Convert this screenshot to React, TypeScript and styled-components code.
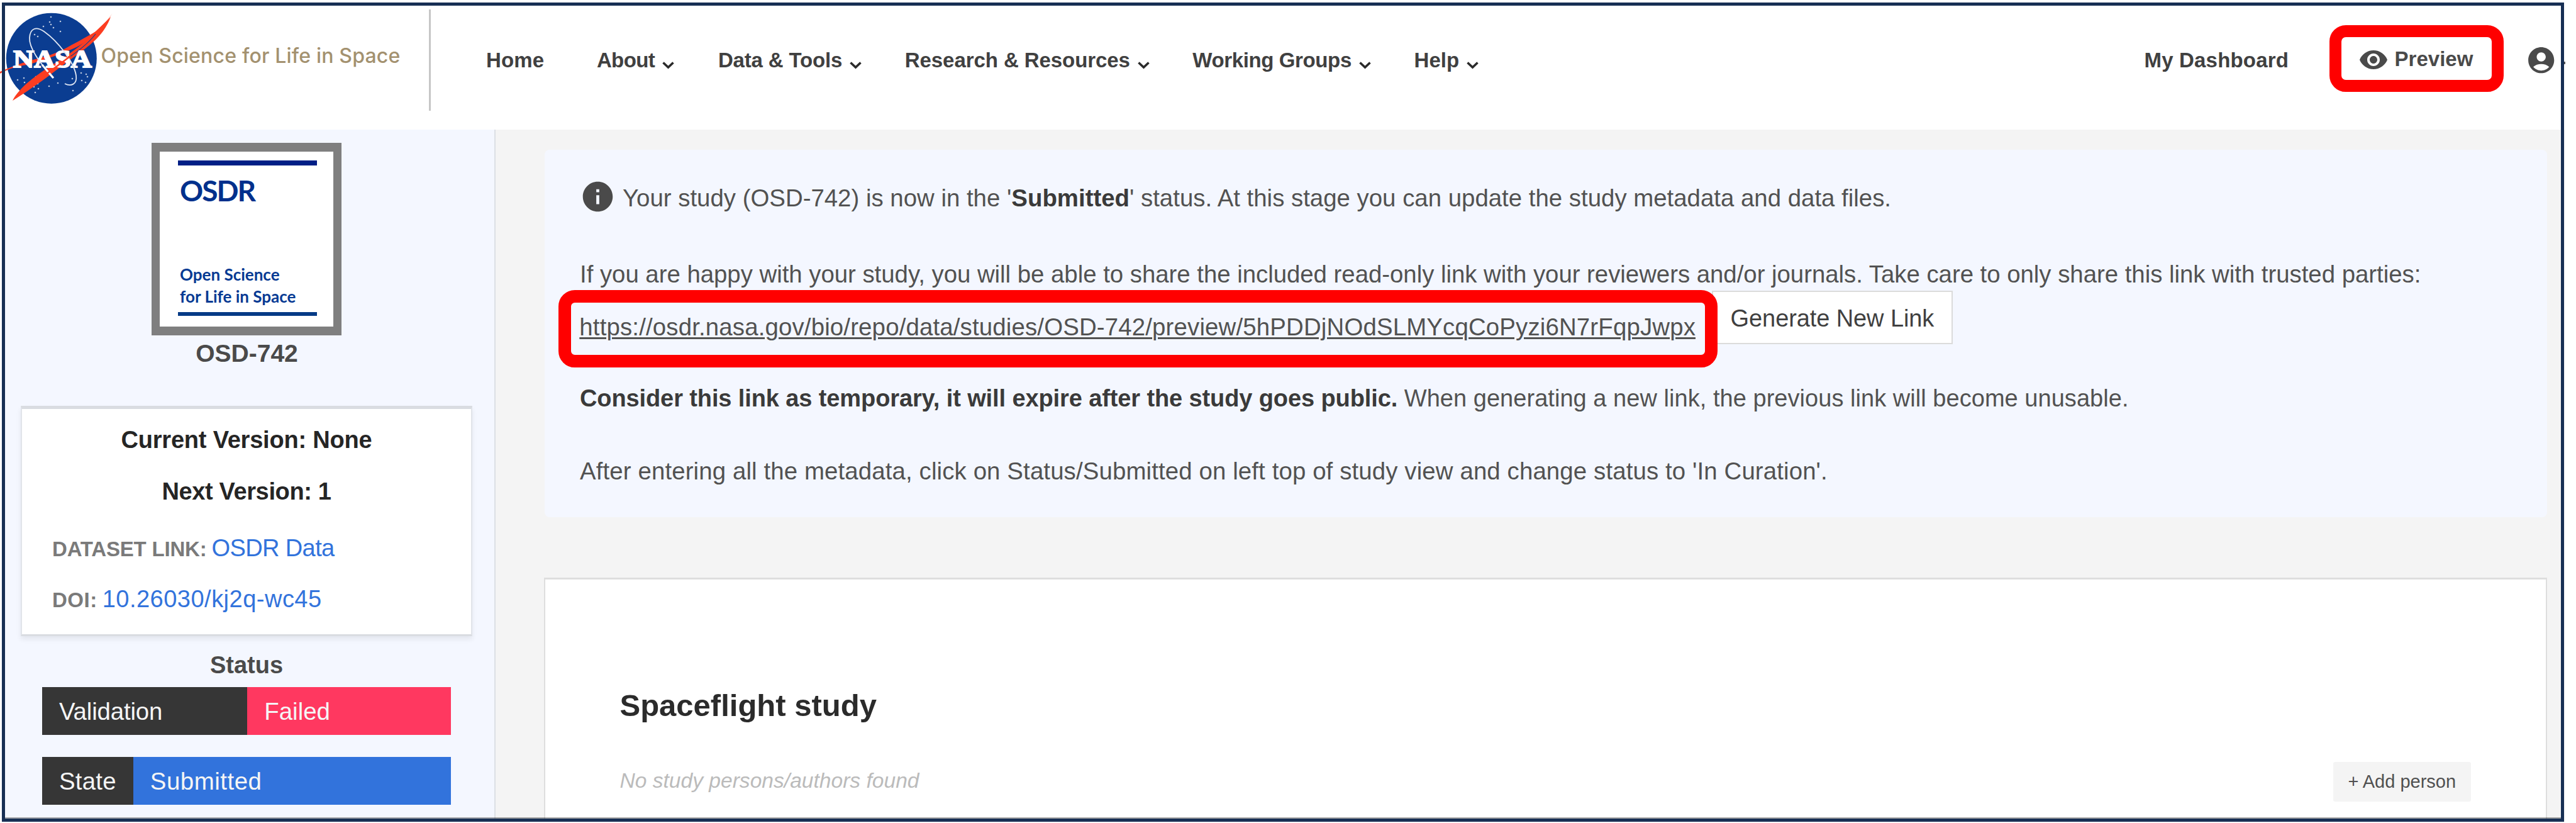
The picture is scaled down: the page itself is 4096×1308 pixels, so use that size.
import React from "react";
import styled, { createGlobalStyle } from "styled-components";
import { MdAccountCircle, MdInfo, MdVisibility } from "react-icons/md";

const GlobalStyle = createGlobalStyle`
  * { box-sizing: border-box; }
  body {
    margin: 0;
    background: #fff;
    font-family: "Liberation Sans", Arial, Helvetica, sans-serif;
    color: #4a4a4a;
  }
`;

const Page = styled.div`
  position: relative;
  width: 4096px;
  height: 1308px;
  overflow: hidden;
  background: #fff;
`;

const Frame = styled.div`
  position: absolute;
  z-index: 5;
  left: 3px;
  top: 4px;
  width: 4074px;
  height: 1302px;
  border: 5px solid #172f54;
  box-shadow: inset 0 -2px 0 rgba(0, 0, 0, 0.35);
  pointer-events: none;
`;

const Header = styled.header`
  display: flex;
  align-items: center;
  height: 206px;
  padding: 1px 31px 16px 0;
  white-space: nowrap;
`;

const Logo = styled.svg`
  flex: none;
  width: 184px;
  height: 160px;
  margin: 0 -23.5px 3px 0;
`;

const Brand = styled.div`
  width: 521.5px;
  margin-bottom: 14px;
  font: 500 32px/40px Inter, sans-serif;
  letter-spacing: 0.19px;
  color: #a3916f;
`;

const Divider = styled.div`
  width: 3px;
  height: 161px;
  margin-right: 88px;
  background: #c6c6c6;
`;

const Nav = styled.nav`
  display: flex;
`;

const NavItem = styled.a<{ $width: number; $spacing?: number }>`
  display: flex;
  align-items: center;
  gap: 12px;
  width: ${(p) => p.$width}px;
  font-size: 33px;
  font-weight: bold;
  line-height: 40px;
  letter-spacing: ${(p) => p.$spacing ?? 0}px;
  color: #404040;
`;

const Chevron = styled.svg`
  width: 19px;
  height: 12px;
  margin-top: 17px;
`;

const UserNav = styled.div`
  display: flex;
  align-items: center;
  margin-left: auto;
`;

const PreviewLink = styled.a`
  display: flex;
  align-items: center;
  gap: 9.5px;
  width: 277px;
  height: 106px;
  margin: 0 34.5px 5px 0;
  padding-left: 27px;
  padding-top: 1px;
  border: 19.5px solid #f00;
  border-radius: 26px;
  font-size: 33px;
  font-weight: bold;
  line-height: 40px;
  color: #4a4a4a;
  svg { margin-top: 2px; }
`;

const OverflowDot = styled.span`
  position: absolute;
  left: 4077px;
  top: 98px;
  width: 2px;
  height: 4px;
  background: #555;
`;

const Body = styled.div`
  display: flex;
  width: 4078px;
  height: 1100px;
  padding-left: 2px;
`;

const Sidebar = styled.aside`
  flex: none;
  display: flex;
  flex-direction: column;
  align-items: center;
  width: 786px;
  padding: 21px 4px 0 0;
  background: #f4f7ff;
  border-right: 2px solid #dcdfe5;
  > * { flex-shrink: 0; }
`;

const Thumbnail = styled.div`
  display: flex;
  flex-direction: column;
  width: 302px;
  height: 306px;
  padding: 14px 25px 0 29px;
  border: solid #7f7f7f;
  border-width: 14px 13px;
  background: #fff;
  font-family: Lato, sans-serif;
  font-weight: bold;
  color: #063a93;
`;

const Rule = styled.div<{ $h: number; $color: string }>`
  flex: none;
  height: ${(p) => p.$h}px;
  background: ${(p) => p.$color};
  width: 221px;
`;

const ThumbTitle = styled.div`
  margin: 16.5px 0 93.5px 3px;
  font-size: 46px;
  line-height: 46px;
  letter-spacing: -2px;
  color: #00308c;
`;

const ThumbText = styled.div`
  margin: 0 0 7px 3px;
  font-size: 26px;
  line-height: 35px;
  white-space: nowrap;
`;

const StudyId = styled.div`
  margin: 7px 0 61px 1px;
  font-size: 39px;
  font-weight: bold;
  line-height: 44px;
`;

const VersionCard = styled.section`
  display: flex;
  flex-direction: column;
  width: 718px;
  height: 366px;
  padding: 27px 48px 0;
  background: #fff;
  border: 2px solid #e1e4ea;
  border-top: 5px solid #d9dce1;
  border-bottom: 3px solid #d9dce1;
  box-shadow: 0 5px 8px rgba(10, 10, 10, 0.07);
`;

const Version = styled.div<{ $gap: number; $spacing: number }>`
  margin-bottom: ${(p) => p.$gap}px;
  font-size: 38px;
  font-weight: bold;
  line-height: 44px;
  letter-spacing: ${(p) => p.$spacing}px;
  text-align: center;
  color: #252525;
`;

const Meta = styled.div`
  display: flex;
  align-items: baseline;
  gap: 8px;
  margin-bottom: 35px;
  line-height: 44px;
`;

const MetaLabel = styled.span<{ $spacing: number }>`
  font-size: 33px;
  font-weight: bold;
  letter-spacing: ${(p) => p.$spacing}px;
  color: #7a7a7a;
`;

const MetaLink = styled.a<{ $spacing: number }>`
  font-size: 38px;
  letter-spacing: ${(p) => p.$spacing}px;
  color: #3273dc;
`;

const StatusTitle = styled.h3`
  margin: 24px 0 12.5px;
  font-size: 38px;
  line-height: 44px;
  color: #4a4a4a;
`;

const StatusRow = styled.div`
  display: flex;
  width: 650px;
  height: 76.5px;
  margin-bottom: 34.5px;
`;

const StatusCell = styled.div<{ $bg: string; $width?: number; $spacing?: number }>`
  display: flex;
  align-items: center;
  flex: ${(p) => (p.$width ? `0 0 ${p.$width}px` : "1")};
  padding: 3px 0 0 27px;
  background: ${(p) => p.$bg};
  font-size: 38.4px;
  letter-spacing: ${(p) => p.$spacing ?? 0}px;
  color: #f5f5f5;
`;

const Main = styled.main`
  display: flex;
  flex-direction: column;
  flex: 1;
  padding: 32px 28px 0 78px;
  background: #f4f4f4;
`;

const Notice = styled.section`
  flex: none;
  height: 584px;
  margin-bottom: 96px;
  padding: 53px 0 0 56px;
  background: #f4f7ff;
  border-radius: 8px;
  white-space: nowrap;
`;

const Line = styled.div<{ $gap: number; $spacing?: number; $size?: number }>`
  display: flex;
  align-items: center;
  height: 48px;
  margin-bottom: ${(p) => p.$gap}px;
  font-size: ${(p) => p.$size ?? 38.4}px;
  line-height: 48px;
  letter-spacing: ${(p) => p.$spacing ?? 0}px;
  white-space: pre;
  color: #525252;
  svg {
    flex: none;
    margin: 0 11px 5px 0;
    color: #4a4a4a;
  }
`;

const Strong = styled.strong<{ $spacing?: number }>`
  letter-spacing: ${(p) => p.$spacing ?? 0}px;
  color: #3a3a3a;
`;

const LinkRow = styled.div`
  display: flex;
  align-items: flex-start;
  height: 123px;
  margin: 1.5px 0 24.5px -33.7px;
`;

const ShareBox = styled.div`
  position: relative;
  z-index: 1;
  width: 1842.6px;
  height: 123px;
  padding: 15px 0 0 13px;
  border: 20.5px solid #f00;
  border-radius: 26px;
`;

const ShareLink = styled.a`
  font-size: 38.4px;
  line-height: 48px;
  letter-spacing: 0.155px;
  text-decoration: underline;
  text-decoration-thickness: 3px;
  text-underline-offset: 3px;
  color: #525252;
`;

const GenerateButton = styled.button`
  width: 383px;
  height: 85px;
  margin: 1px 0 0 -9px;
  padding: 4px 0 0;
  border: 2.5px solid #dbdbdb;
  background: #fff;
  font: 38px "Liberation Sans", sans-serif;
  letter-spacing: -0.1px;
  color: #404040;
`;

const StudyCard = styled.section`
  flex: 1;
  margin-left: -1px;
  padding: 170px 119px 0 118.5px;
  border: 2px solid #dedede;
  border-top-width: 3px;
  background: #fff;
`;

const StudyTitle = styled.h2`
  margin: 0 0 59.5px;
  font-size: 49px;
  line-height: 60px;
  color: #2b2b2b;
`;

const People = styled.div`
  display: flex;
  align-items: center;
  justify-content: space-between;
`;

const EmptyText = styled.em`
  margin-bottom: 3px;
  font-size: 33.6px;
  color: #bbb;
`;

const AddButton = styled.button`
  width: 219.5px;
  height: 63px;
  padding: 0;
  border: 0;
  border-radius: 3px;
  background: #f4f4f4;
  font: 29px "Liberation Sans", sans-serif;
  color: #505050;
`;

const stars = [
  [81, 27], [79, 35], [96, 34], [85, 44], [69, 42], [96, 50], [55, 55], [60, 58], [81, 39],
  [28, 127], [38, 124], [39, 131], [60, 133], [54, 138], [61, 141], [56, 147], [57, 122],
  [78, 137], [92, 132], [116, 144], [129, 116], [137, 118], [139, 122], [130, 128], [136, 131], [115, 125],
];

const NasaLogo = () => (
  <Logo viewBox="0 14 184 160">
    <circle cx="81.8" cy="92.7" r="72" fill="#0b3d91" />
    <g fill="#fff" opacity="0.7">
      {stars.map(([x, y]) => (
        <circle key={`${x}-${y}`} cx={x} cy={y} r="1.3" />
      ))}
    </g>
    <path
      d="M178.8 21 C170 36 156 49 142 56 C130 63 118 69 104 77 C84 88 62 92 42 98 C26 103 12 109 0 114 L0 117 C14 109 28 105 44 103 C66 97 90 88 110 80 C126 74 142 64 154 50 C164 39 174 29 178.8 21 Z"
      fill="#fc3d21"
    />
    <path
      d="M176 27 C166 53 150 66 132 80 C112 95 92 109 73 124 C52 139 36 150 20 160 C23 153 32 142 42 133 C64 114 92 98 112 84 C132 70 146 57 154 48 Z"
      fill="#fc3d21"
    />
    <path d="M152 54 C139 71 120 84 106 94" fill="none" stroke="#0b3d91" strokeWidth="1.2" />
    <text
      x="21"
      y="106.5"
      fill="#fff"
      stroke="#fff"
      strokeWidth="2"
      fontFamily="Liberation Serif, serif"
      fontWeight="bold"
      fontSize="40"
      textLength="125"
      lengthAdjust="spacingAndGlyphs"
    >
      NASA
    </text>
    <path
      d="M84 124 C62 98 46 76 47 60 C48 44 58 42 70 50 C94 67 118 100 121 120 C123 134 113 138 103 133"
      fill="none"
      stroke="#dfe6f3"
      strokeWidth="1.8"
    />
    <path d="M67 103 L85 124" stroke="#fff" strokeWidth="3" />
    <path d="M112 89 C98 100 84 110 69 121" fill="none" stroke="#fc3d21" strokeWidth="2.5" />
  </Logo>
);

const navItems = [
  { label: "Home", width: 175.9, spacing: 0.1 },
  { label: "About", width: 193, spacing: -0.6, menu: true },
  { label: "Data & Tools", width: 296.9, spacing: -0.17, menu: true },
  { label: "Research & Resources", width: 457.5, spacing: -0.07, menu: true },
  { label: "Working Groups", width: 352.3, spacing: -0.38, menu: true },
  { label: "Help", width: 110, spacing: 0, menu: true },
];

export default function App() {
  return (
    <Page>
      <GlobalStyle />
      <Header>
        <NasaLogo />
        <Brand>Open Science for Life in Space</Brand>
        <Divider />
        <Nav>
          {navItems.map((item) => (
            <NavItem key={item.label} $width={item.width} $spacing={item.spacing}>
              {item.label}
              {item.menu && (
                <Chevron viewBox="0 0 19 12">
                  <path d="M1.5 1.5 L9.5 9 L17.5 1.5" fill="none" stroke="#2a2a2a" strokeWidth="3.6" />
                </Chevron>
              )}
            </NavItem>
          ))}
        </Nav>
        <UserNav>
          <NavItem $width={294.6} $spacing={0.18}>My Dashboard</NavItem>
          <PreviewLink>
            <MdVisibility size={48} />
            Preview
          </PreviewLink>
          <MdAccountCircle size={49.4} />
        </UserNav>
        <OverflowDot />
      </Header>

      <Body>
        <Sidebar>
          <Thumbnail>
            <Rule $h={8} $color="#001f86" />
            <ThumbTitle>OSDR</ThumbTitle>
            <ThumbText>
              Open Science
              <br />
              for Life in Space
            </ThumbText>
            <Rule $h={6} $color="#063a86" />
          </Thumbnail>
          <StudyId>OSD-742</StudyId>
          <VersionCard>
            <Version $gap={37.5} $spacing={-0.21}>Current Version: None</Version>
            <Version $gap={46} $spacing={-0.37}>Next Version: 1</Version>
            <Meta>
              <MetaLabel $spacing={-0.2}>DATASET LINK:</MetaLabel>
              <MetaLink $spacing={-0.61}>OSDR Data</MetaLink>
            </Meta>
            <Meta>
              <MetaLabel $spacing={0.5}>DOI:</MetaLabel>
              <MetaLink $spacing={0.49}>10.26030/kj2q-wc45</MetaLink>
            </Meta>
          </VersionCard>
          <StatusTitle>Status</StatusTitle>
          <StatusRow>
            <StatusCell $bg="#363636" $width={326.3} $spacing={-0.15}>Validation</StatusCell>
            <StatusCell $bg="#ff3860">Failed</StatusCell>
          </StatusRow>
          <StatusRow>
            <StatusCell $bg="#363636" $width={144.8} $spacing={0.25}>State</StatusCell>
            <StatusCell $bg="#3273dc" $spacing={0.54}>Submitted</StatusCell>
          </StatusRow>
        </Sidebar>

        <Main>
          <Notice>
            <Line $gap={72.5}>
              <MdInfo size={57} />
              Your study (OSD-742) is now in the '<Strong>Submitted</Strong>' status. At this stage you can
              {" update the study metadata and data files."}
            </Line>
            <Line $gap={0} $spacing={-0.03}>
              If you are happy with your study, you will be able to share the included read-only link with your
              {" reviewers and/or journals. Take care to only share this link with trusted parties:"}
            </Line>
            <LinkRow>
              <ShareBox>
                <ShareLink>
                  https://osdr.nasa.gov/bio/repo/data/studies/OSD-742/preview/5hPDDjNOdSLMYcqCoPyzi6N7rFqpJwpx
                </ShareLink>
              </ShareBox>
              <GenerateButton>Generate New Link</GenerateButton>
            </LinkRow>
            <Line $gap={68} $size={38} $spacing={0.04}>
              <Strong $spacing={-0.11}>
                Consider this link as temporary, it will expire after the study goes public.
              </Strong>
              <span>{" When generating a new link, the previous link will become unusable."}</span>
            </Line>
            <Line $gap={0} $spacing={0.12}>
              After entering all the metadata, click on Status/Submitted on left top of study view and change
              {" status to 'In Curation'."}
            </Line>
          </Notice>
          <StudyCard>
            <StudyTitle>Spaceflight study</StudyTitle>
            <People>
              <EmptyText>No study persons/authors found</EmptyText>
              <AddButton>+ Add person</AddButton>
            </People>
          </StudyCard>
        </Main>
      </Body>
      <Frame />
    </Page>
  );
}
